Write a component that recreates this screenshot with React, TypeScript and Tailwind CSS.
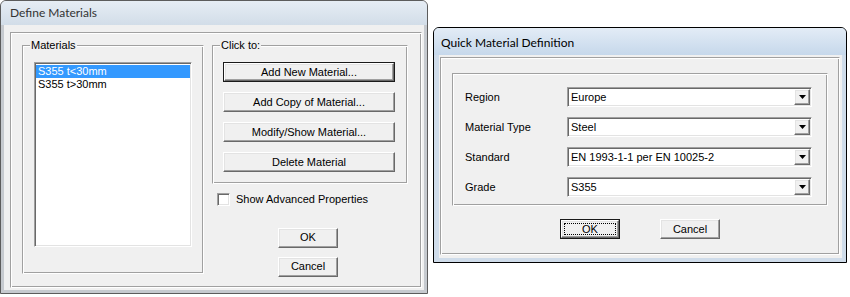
import React from "react";

const sunken =
  "border border-t-[#a0a0a0] border-l-[#a0a0a0] border-r-white border-b-white shadow-[inset_1px_1px_0_#696969,inset_-1px_-1px_0_#e3e3e3]";
const raised =
  "border border-t-white border-l-white border-r-[#696969] border-b-[#696969] shadow-[inset_-1px_-1px_0_#a0a0a0,inset_1px_1px_0_#e3e3e3]";
const etched =
  "border border-t-[#a0a0a0] border-l-[#a0a0a0] border-r-white border-b-white shadow-[inset_1px_1px_0_#fff,inset_-1px_-1px_0_#a0a0a0]";

function Btn({
  label,
  def,
  focus,
  className,
}: {
  label: string;
  def?: boolean;
  focus?: boolean;
  className: string;
}) {
  if (def)
    return (
      <div className={`border border-[#1a1a1a] shrink-0 ${className}`}>
        <div
          className={`${raised} w-full h-full bg-[#f0f0f0] flex items-center justify-center relative`}
        >
          <span>{label}</span>
          {focus && (
            <div className="absolute inset-[2px] border border-dotted border-black" />
          )}
        </div>
      </div>
    );
  return (
    <div
      className={`${raised} shrink-0 bg-[#f0f0f0] flex items-center justify-center ${className}`}
    >
      <span>{label}</span>
    </div>
  );
}

function Group({
  label,
  className,
  children,
}: {
  label?: string;
  className: string;
  children?: React.ReactNode;
}) {
  return (
    <div className={`relative shrink-0 ${etched} ${className}`}>
      {label && (
        <span className="absolute left-[7px] top-[-8px] px-[1px] bg-[#f0f0f0] leading-[14px]">
          {label}
        </span>
      )}
      {children}
    </div>
  );
}

function Combo({ value }: { value: string }) {
  return (
    <div
      className={`${sunken} w-[245px] h-[20px] bg-white flex items-stretch p-[1px]`}
    >
      <span className="flex-1 flex items-center pl-[2px]">{value}</span>
      <div
        className={`${raised} w-[16px] bg-[#f0f0f0] flex items-center justify-center`}
      >
        <svg width="7" height="4" viewBox="0 0 7 4">
          <path d="M0 0H7L3.5 4Z" fill="#000" />
        </svg>
      </div>
    </div>
  );
}

export default function App() {
  return (
    <div className="relative w-[850px] h-[297px] bg-white overflow-hidden text-[11px] text-black font-['Liberation_Sans',Arial,sans-serif]">
      {/* Define Materials */}
      <div className="absolute left-0 top-0 w-[428px] h-[294px] border border-[#5c5c5c] rounded-t-[6px] bg-[#c6cacf] flex flex-col overflow-hidden">
        <div className="h-[24px] shrink-0 bg-linear-to-b from-[#e6edf4] to-[#d2dde8] pl-[9px] flex items-center text-[12px] text-[#333] font-['Lato',sans-serif]">
          Define Materials
        </div>
        <div className="flex-1 mx-[3px] mb-[3px] bg-[#f0f0f0] pt-[7px] pl-[6px] pr-[2px] pb-[2px] flex">
          <div className={`flex-1 ${etched} flex items-start pl-[11px] pt-[12px]`}>
            <Group label="Materials" className="w-[182px] h-[229px] pl-[11px] pt-[16px]">
              <div className={`${sunken} w-[158px] h-[185px] bg-white pt-[2px] px-[1px]`}>
                <div className="h-[13px] leading-[13px] pl-[2px] bg-[#3399ff] text-white">
                  S355 t&lt;30mm
                </div>
                <div className="h-[13px] leading-[13px] pl-[2px]">S355 t&gt;30mm</div>
              </div>
            </Group>
            <div className="ml-[8px] flex flex-col">
              <Group
                label="Click to:"
                className="w-[196px] h-[139px] pl-[10px] pt-[16px] flex flex-col gap-[10px]"
              >
                <Btn label="Add New Material..." def className="w-[172px] h-[20px]" />
                <Btn label="Add Copy of Material..." className="w-[172px] h-[20px]" />
                <Btn label="Modify/Show Material..." className="w-[172px] h-[20px]" />
                <Btn label="Delete Material" className="w-[172px] h-[20px]" />
              </Group>
              <div className="mt-[7px] ml-[5px] flex items-center">
                <div className={`${sunken} w-[13px] h-[13px] bg-white`} />
                <span className="ml-[6px]">Show Advanced Properties</span>
              </div>
              <Btn label="OK" className="mt-[20px] ml-[66px] w-[60px] h-[20px]" />
              <Btn label="Cancel" className="mt-[9px] ml-[66px] w-[60px] h-[20px]" />
            </div>
          </div>
        </div>
      </div>

      {/* Quick Material Definition */}
      <div className="absolute left-[433px] top-[27px] w-[414px] h-[236px] border border-black rounded-t-[6px] bg-[#cfdcea] flex flex-col overflow-hidden">
        <div className="h-[27px] shrink-0 bg-linear-to-b from-[#e3ecf6] to-[#c6d8eb] pl-[7px] pt-[3px] flex items-center text-[12px] text-black font-['Lato',sans-serif]">
          Quick Material Definition
        </div>
        <div className="flex-1 ml-[5px] mr-[4px] mb-[4px] bg-[#f0f0f0] pt-[2px] pl-[1px] pr-[2px] pb-[3px] flex">
          <div className={`flex-1 ${etched} flex flex-col pl-[11px] pt-[15px]`}>
            <Group className="w-[376px] h-[133px] pl-[12px] pt-[13px] flex flex-col gap-[10px]">
              {[
                ["Region", "Europe"],
                ["Material Type", "Steel"],
                ["Standard", "EN 1993-1-1 per EN 10025-2"],
                ["Grade", "S355"],
              ].map(([l, v]) => (
                <div key={l} className="flex items-center h-[20px]">
                  <span className="w-[102px]">{l}</span>
                  <Combo value={v} />
                </div>
              ))}
            </Group>
            <div className="mt-[13px] ml-[108px] flex gap-[40px]">
              <Btn label="OK" def focus className="w-[60px] h-[20px]" />
              <Btn label="Cancel" className="w-[60px] h-[20px]" />
            </div>
          </div>
        </div>
      </div>
    </div>
  );
}
